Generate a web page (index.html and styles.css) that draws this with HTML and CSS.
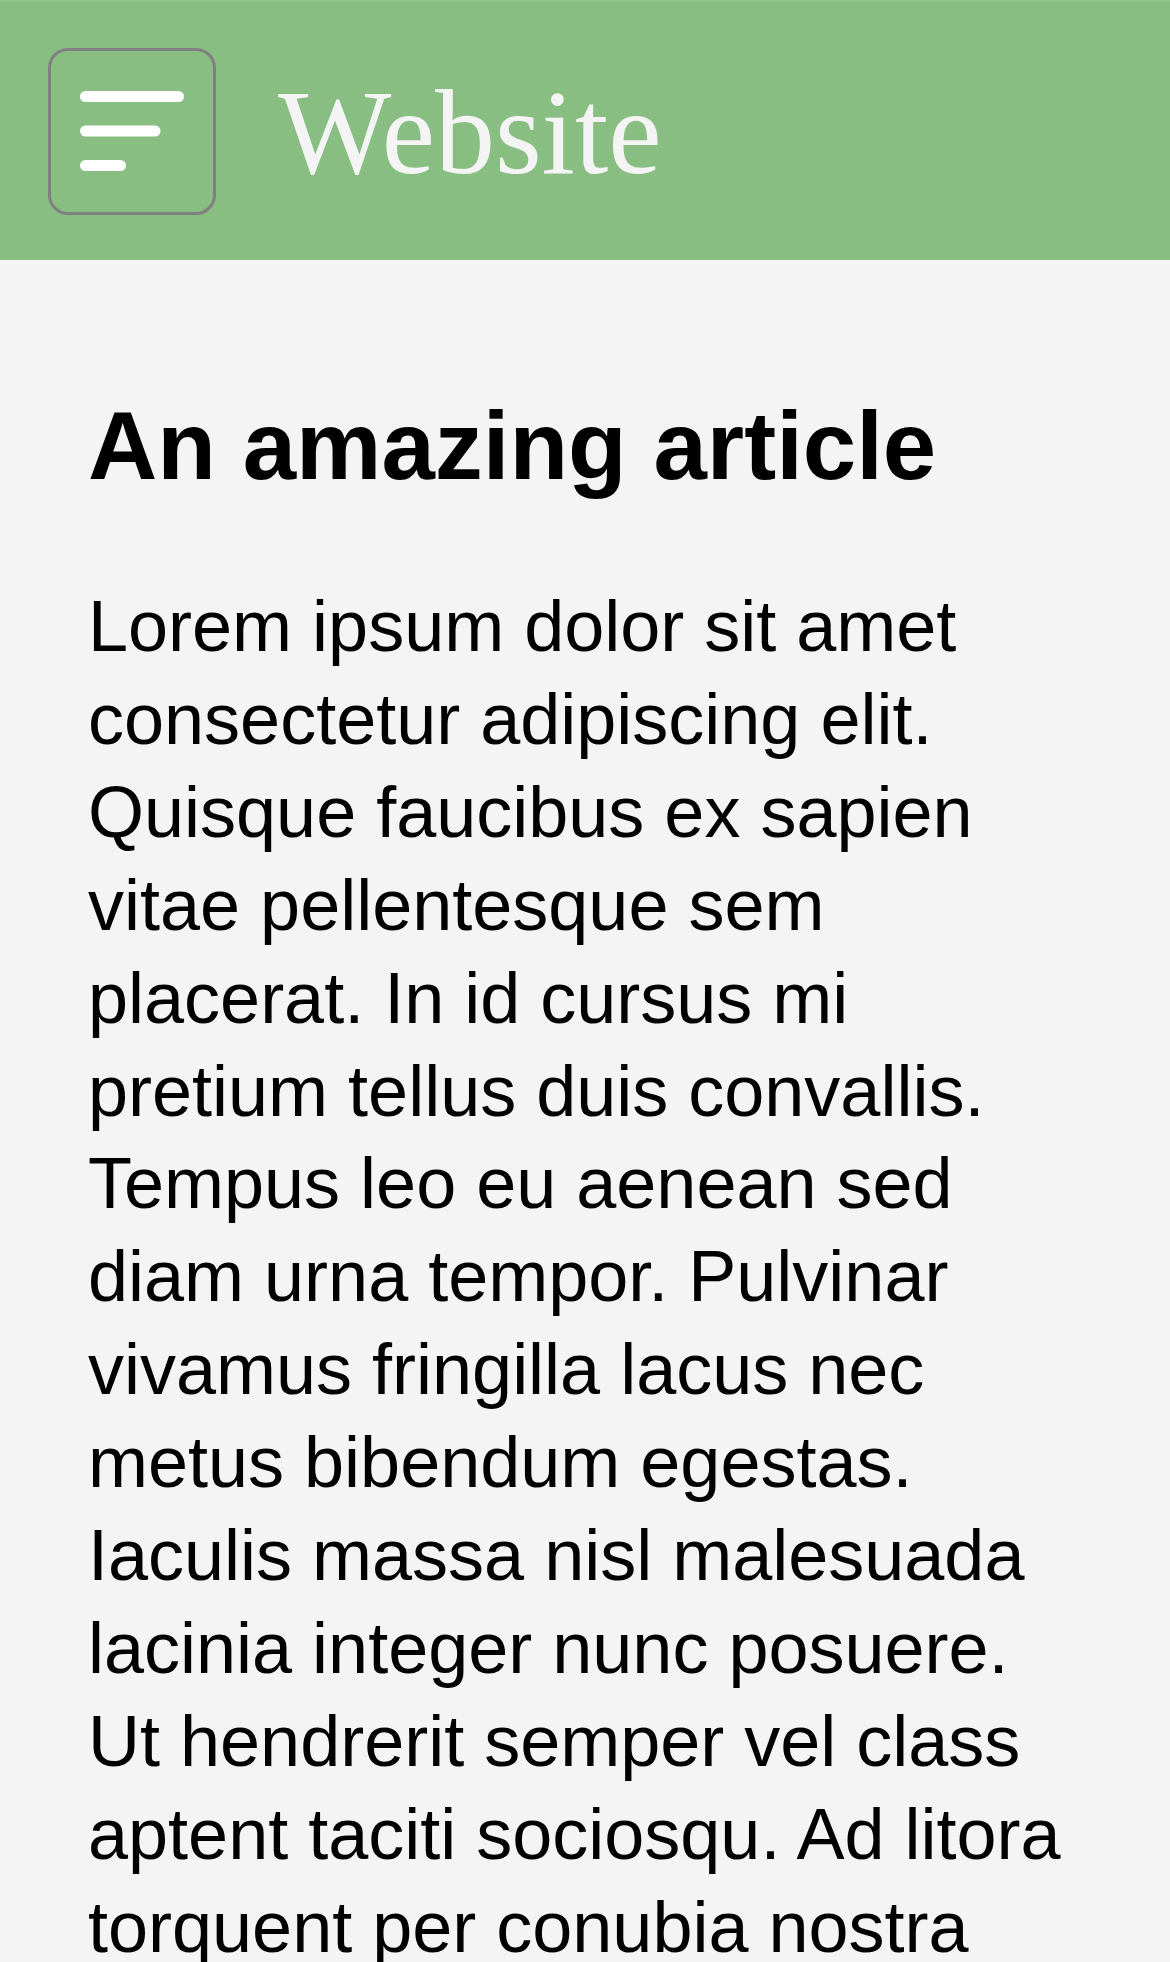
FILE: index.html
```html
<!DOCTYPE html>
<html lang="en">
<head>
<meta charset="utf-8">
<title>Website</title>
<link rel="stylesheet" href="styles.css">
</head>
<body>
<header class="site-header">
  <button class="menu-btn" aria-label="Menu">
    <svg class="menu-icon" width="104" height="81" viewBox="0 0 104 81" aria-hidden="true">
      <line x1="5.5" y1="5.5" x2="98.5" y2="5.5"/>
      <line x1="5.5" y1="40" x2="75" y2="40"/>
      <line x1="5.5" y1="74.5" x2="40.5" y2="74.5"/>
    </svg>
  </button>
  <div class="site-title">Website</div>
</header>
<main class="article">
  <h1 class="article-title">An amazing article</h1>
  <p class="article-body">Lorem ipsum dolor sit amet consectetur adipiscing elit. Quisque faucibus ex sapien vitae pellentesque sem placerat. In id cursus mi pretium tellus duis convallis. Tempus leo eu aenean sed diam urna tempor. Pulvinar vivamus fringilla lacus nec metus bibendum egestas. Iaculis massa nisl malesuada lacinia integer nunc posuere. Ut hendrerit semper vel class aptent taciti sociosqu. Ad litora torquent per conubia nostra inceptos himenaeos.</p>
</main>
</body>
</html>
```

FILE: styles.css
```css
html, body {
  margin: 0;
  padding: 0;
}
body {
  background: #f4f4f4;
  font-family: "Liberation Sans", Arial, sans-serif;
  color: #000;
  overflow: hidden;
}
.site-header {
  height: 260px;
  box-sizing: border-box;
  background: #88be81;
  border-top: 2px solid #8ec487;
  display: flex;
  align-items: center;
  padding-left: 48px;
  gap: 62px;
}
.menu-btn {
  width: 168px;
  height: 167px;
  box-sizing: border-box;
  border: 3px solid #808080;
  border-radius: 20px;
  background: transparent;
  padding: 0 0 0 29px;
  margin: 0;
  display: flex;
  align-items: center;
  justify-content: flex-start;
  flex-shrink: 0;
}
.menu-icon line {
  stroke: #ffffff;
  stroke-width: 11;
  stroke-linecap: round;
}
.site-title {
  font-family: "Liberation Serif", "Times New Roman", serif;
  font-size: 120px;
  line-height: 120px;
  color: #f4f4f4;
  padding-top: 3px;
}
.article {
  padding: 131px 88px 0 88px;
}
.article-title {
  margin: 0 0 79px 0;
  font-size: 96px;
  line-height: 110px;
  font-weight: bold;
}
.article-body {
  margin: 0;
  font-size: 72px;
  line-height: 92.9px;
}
```
